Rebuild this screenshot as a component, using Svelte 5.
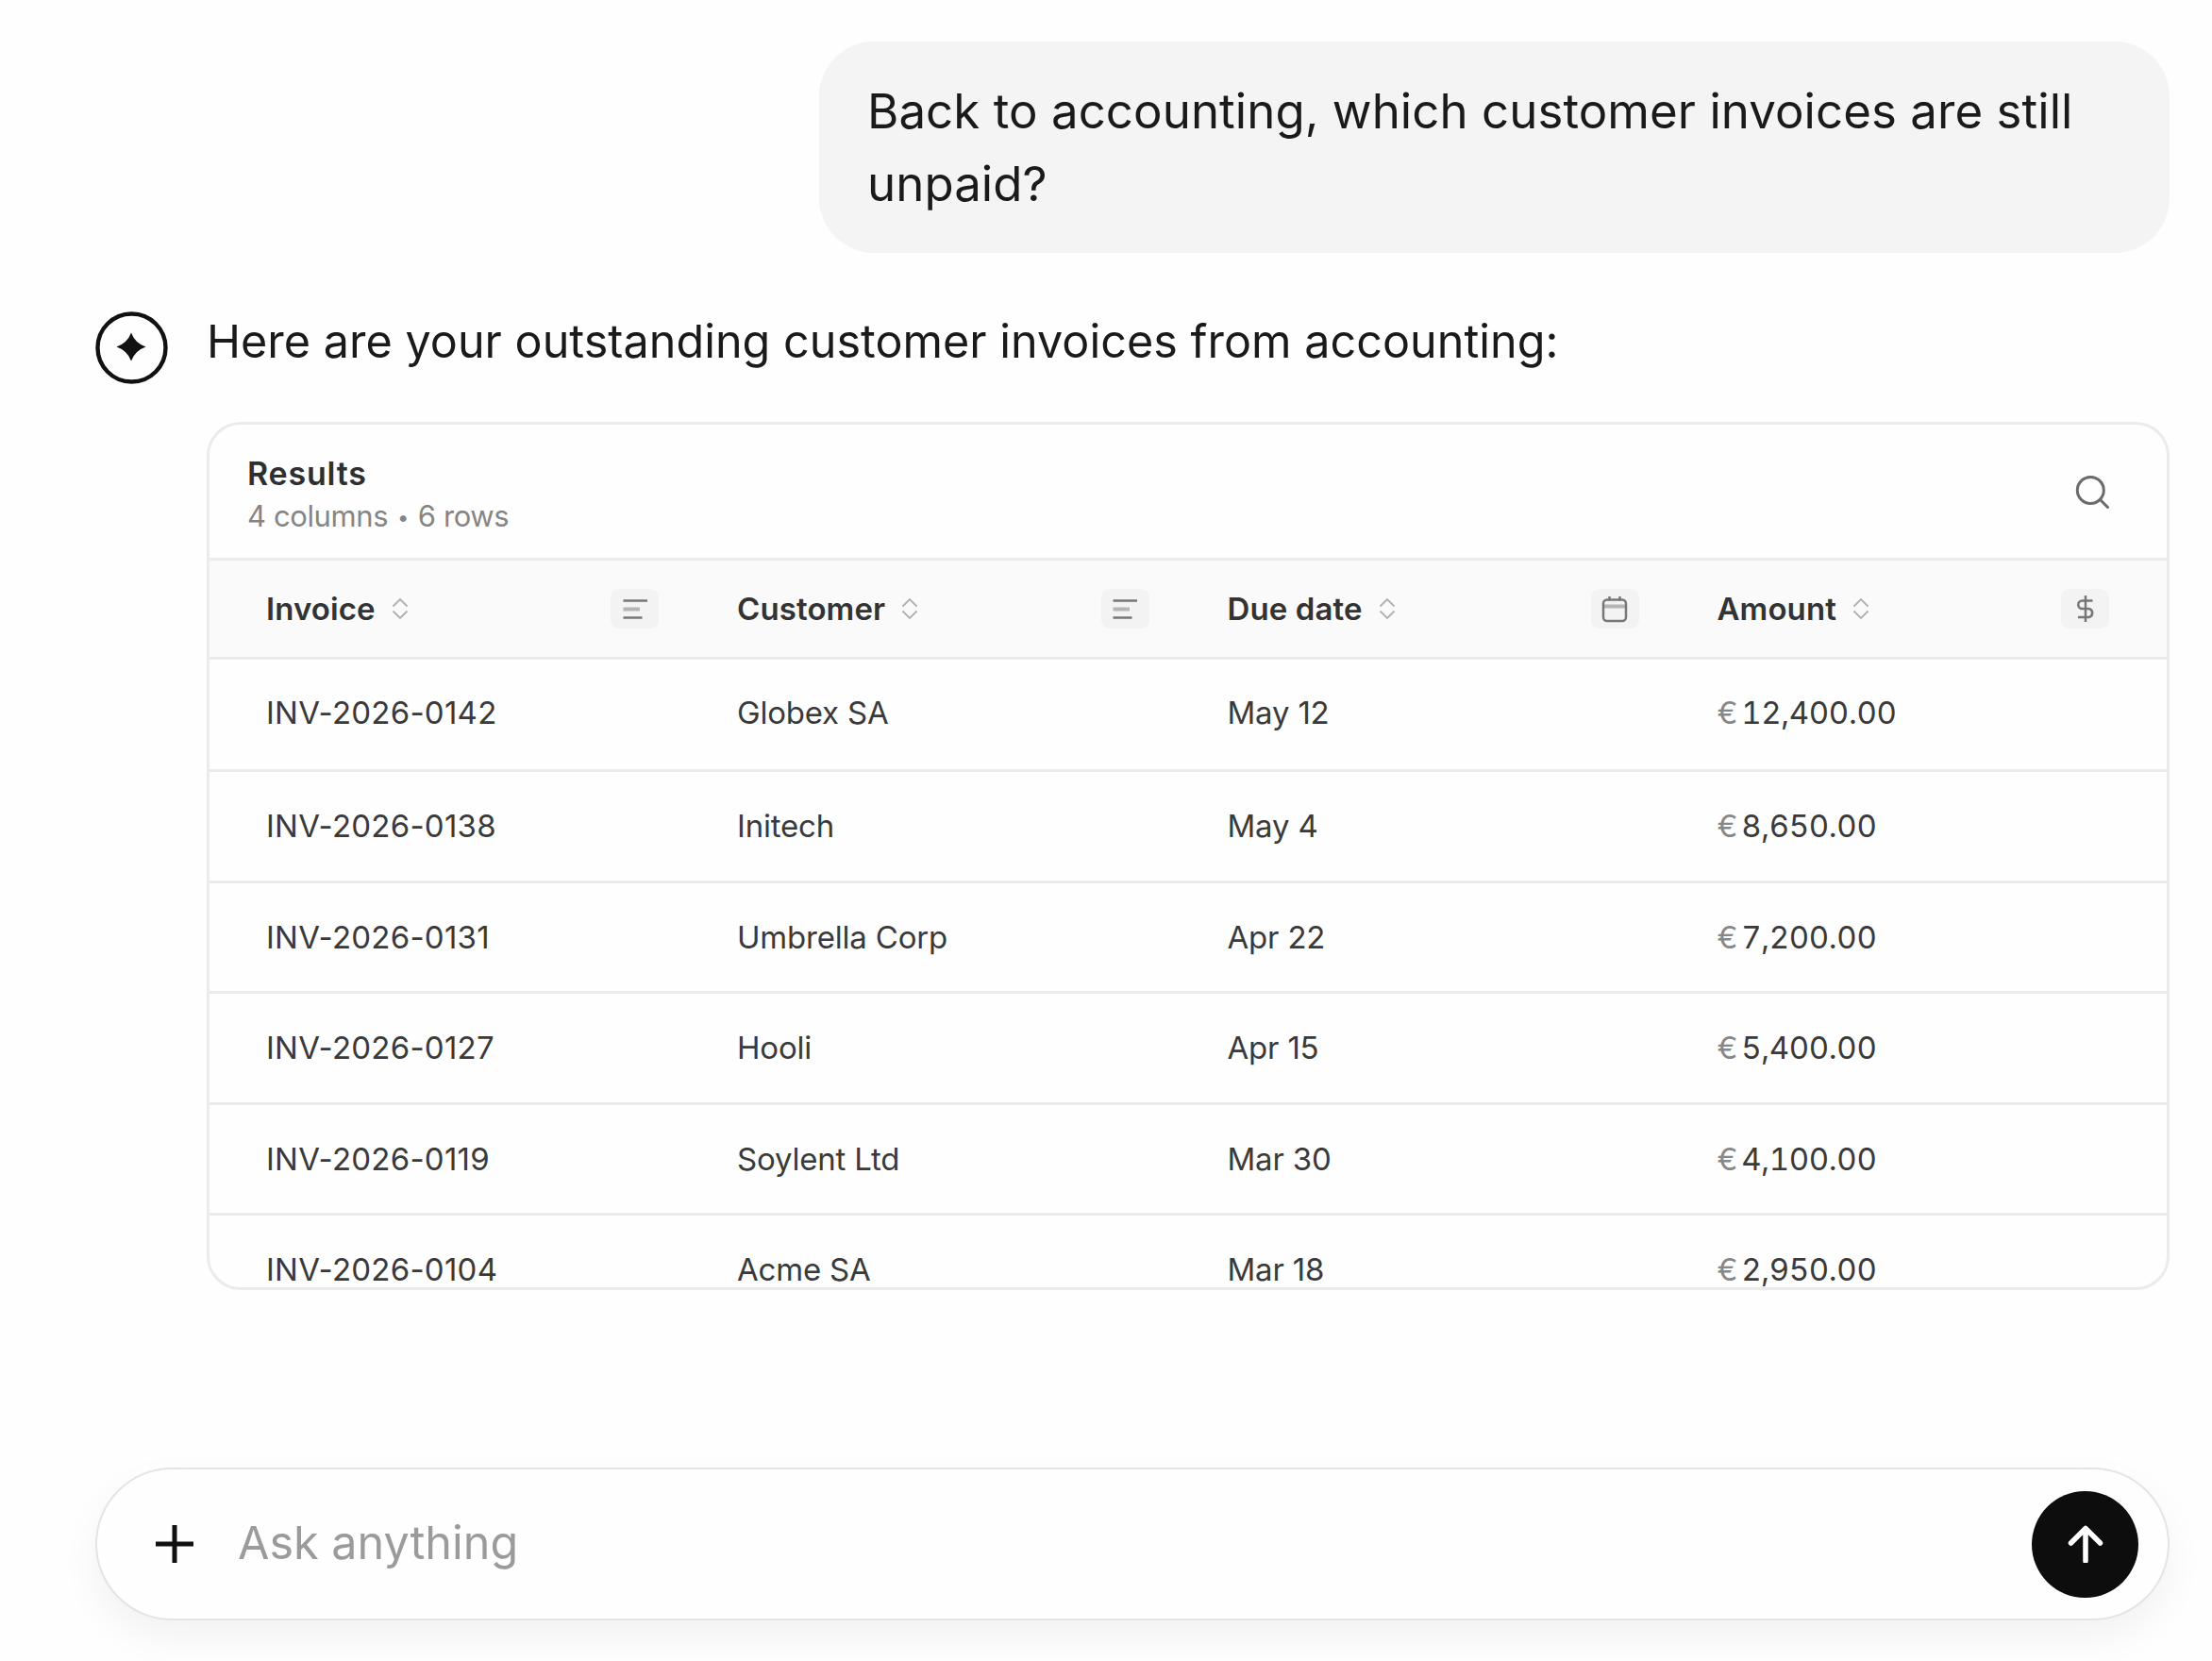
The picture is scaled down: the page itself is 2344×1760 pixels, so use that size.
<script lang="ts">
  type Kind = 'text' | 'date' | 'currency'

  const columns: { label: string; kind: Kind }[] = [
    { label: 'Invoice', kind: 'text' },
    { label: 'Customer', kind: 'text' },
    { label: 'Due date', kind: 'date' },
    { label: 'Amount', kind: 'currency' },
  ]

  const rows = [
    { id: 'INV-2026-0142', customer: 'Globex SA', due: 'May 12', amount: '12,400.00' },
    { id: 'INV-2026-0138', customer: 'Initech', due: 'May 4', amount: '8,650.00' },
    { id: 'INV-2026-0131', customer: 'Umbrella Corp', due: 'Apr 22', amount: '7,200.00' },
    { id: 'INV-2026-0127', customer: 'Hooli', due: 'Apr 15', amount: '5,400.00' },
    { id: 'INV-2026-0119', customer: 'Soylent Ltd', due: 'Mar 30', amount: '4,100.00' },
    { id: 'INV-2026-0104', customer: 'Acme SA', due: 'Mar 18', amount: '2,950.00' },
  ]

  let draft = $state('')
</script>

<main class="chat">
  <div class="bubble">Back to accounting, which customer invoices are still unpaid?</div>

  <div class="reply">
    <svg class="avatar" viewBox="0 0 77 77" aria-hidden="true">
      <circle cx="38.5" cy="38.5" r="36" fill="none" stroke="#111" stroke-width="4.4" />
      <path d="M38 22.5Q42 33.500 53.500 37.500Q42 41.500 38 52.500Q34 41.500 22.500 37.500Q34 33.500 38 22.500Z" fill="#111" />
    </svg>

    <div class="content">
      <p class="intro">Here are your outstanding customer invoices from accounting:</p>

      <section class="card">
        <header class="card-head">
          <div>
            <h2>Results</h2>
            <p class="meta">{columns.length} columns <span class="dot">•</span> {rows.length} rows</p>
          </div>
          <button class="search" aria-label="Search">
            <svg width="40" height="40" viewBox="0 0 40 40">
              <circle cx="18.300" cy="18.500" r="14" />
              <path d="M28.500 28.500L36.500 36.500" />
            </svg>
          </button>
        </header>

        <div class="row labels">
          {#each columns as col}
            <div class="cell">
              <span class="label">{col.label}</span>
              <svg class="sort" width="18" height="24" viewBox="0 0 18 24">
                <path d="M1.500 9.500L9 2L16.500 9.500M1.500 14.500L9 22L16.500 14.500" />
              </svg>
              <span class="kind">
                <svg width="36" height="36" viewBox="0 0 36 36">
                  {#if col.kind === 'text'}
                    <path d="M5.500 9.500H31M5.500 27.500H25.500" />
                    <path class="soft" d="M5.500 18.500H23" />
                  {:else if col.kind === 'date'}
                    <path class="soft" d="M7 15.500H29" />
                    <rect x="6" y="8.500" width="24" height="22.500" rx="4" />
                    <path d="M12.500 5V9.500M23.500 5V9.500" />
                  {:else}
                    <path d="M18 4V32M25.500 9.500H14.500A4.200 4.200 0 0 0 14.500 18H21.500A4.600 4.600 0 0 1 21.500 27H10" />
                  {/if}
                </svg>
              </span>
            </div>
          {/each}
        </div>

        {#each rows as row}
          <div class="row">
            <div class="cell id">{row.id}</div>
            <div class="cell">{row.customer}</div>
            <div class="cell">{row.due}</div>
            <div class="cell amount"><span class="euro">€</span>{row.amount}</div>
          </div>
        {/each}
      </section>
    </div>
  </div>

  <form class="composer" onsubmit={(e) => e.preventDefault()}>
    <button class="add" type="button" aria-label="Add">
      <svg width="42" height="42" viewBox="0 0 42 42"><path d="M21 1V41M1 21H41" /></svg>
    </button>
    <input bind:value={draft} placeholder="Ask anything" />
    <button class="send" type="submit" aria-label="Send">
      <svg width="40" height="40" viewBox="0 0 40 40"><path d="M20 38V4M4.500 19L20 3.500L35.500 19" /></svg>
    </button>
  </form>
</main>

<style>
  :global(body) {
    background: #fefefe;
  }
  .chat {
    box-sizing: border-box;
    width: 2344px;
    height: 1760px;
    padding: 44px 45px 0 101px;
    display: flex;
    flex-direction: column;
    overflow: hidden;
    font-family: Inter, 'Liberation Sans', sans-serif;
    color: #1a1a1a;
  }
  button {
    padding: 0;
    border: 0;
    background: none;
    display: flex;
    align-items: center;
    justify-content: center;
  }
  svg {
    display: block;
  }
  p,
  h2 {
    margin: 0;
  }
  .bubble {
    box-sizing: border-box;
    align-self: flex-end;
    width: 1431px;
    height: 224px;
    padding: 36px 51px;
    border-radius: 58px;
    background: #f4f4f4;
    font-size: 51px;
    line-height: 76.5px;
    letter-spacing: 0.05px;
  }
  .reply {
    display: flex;
    gap: 41px;
    margin-top: 62px;
  }
  .avatar {
    flex: none;
    width: 77px;
    height: 77px;
  }
  .content {
    flex: 1;
  }
  .intro {
    height: 117px;
    font-size: 48.5px;
    line-height: 63px;
    letter-spacing: 0.02px;
    white-space: nowrap;
  }
  .card {
    box-sizing: border-box;
    height: 920px;
    border: 3px solid #ebebeb;
    border-radius: 36px;
    background: #fefefe;
    overflow: hidden;
  }
  .card-head {
    box-sizing: border-box;
    height: 144px;
    padding: 0 59px 0 40px;
    display: flex;
    align-items: center;
    justify-content: space-between;
    border-bottom: 3px solid #ebebeb;
  }
  h2 {
    padding-top: 7px;
    font-size: 34px;
    line-height: 46px;
    font-weight: 600;
    letter-spacing: 0.8px;
    color: #2e3030;
  }
  .meta {
    font-size: 31px;
    line-height: 44px;
    letter-spacing: -0.4px;
    color: #858585;
  }
  .dot {
    margin: 0 1.5px;
    font-size: 22px;
    vertical-align: 2px;
  }
  .search svg {
    fill: none;
    stroke: #6b6b6b;
    stroke-width: 3;
    stroke-linecap: round;
  }
  .row {
    box-sizing: border-box;
    height: 117.5px;
    display: grid;
    grid-template-columns: 499px 519.500px 519px 1fr;
    border-bottom: 3px solid #ebebeb;
    font-size: 33px;
    letter-spacing: -0.2px;
    color: #3a3a3a;
  }
  .row.labels {
    height: 104.5px;
    background: #fafafa;
    font-weight: 600;
    letter-spacing: 0.1px;
    color: #333;
  }
  .labels + .row {
    height: 119.5px;
    padding-bottom: 3px;
  }
  .cell {
    padding: 0 23px 0 60px;
    display: flex;
    align-items: center;
  }
  .cell:last-child {
    padding-right: 61px;
  }
  .id {
    letter-spacing: 0.25px;
  }
  .amount {
    letter-spacing: -0.35px;
    font-variant-numeric: tabular-nums;
  }
  .sort {
    margin-left: 17px;
    fill: none;
    stroke: #b0b0b0;
    stroke-width: 1.800;
  }
  .kind {
    width: 51px;
    height: 42px;
    margin-left: auto;
    display: flex;
    align-items: center;
    justify-content: center;
    border-radius: 9px;
    background: #f3f3f3;
  }
  .kind svg {
    fill: none;
    stroke: #777;
    stroke-width: 2.500;
  }
  .kind .soft {
    stroke: #b5b5b5;
    stroke-width: 4;
  }
  .euro {
    margin-right: 4px;
    color: #888;
  }
  .composer {
    box-sizing: border-box;
    height: 162px;
    margin-top: 188px;
    padding: 0 31px 0 61px;
    display: flex;
    align-items: center;
    border: 2px solid #e4e4e4;
    border-radius: 81px;
    background: #fefefe;
    box-shadow: 0 18px 42px rgba(0, 0, 0, 0.05);
  }
  .add svg {
    fill: none;
    stroke: #111;
    stroke-width: 5;
  }
  input {
    flex: 1;
    margin-left: 46px;
    padding: 0 0 4px;
    border: 0;
    outline: 0;
    background: none;
    font: 48.5px Inter, 'Liberation Sans', sans-serif;
    color: #1a1a1a;
  }
  input::placeholder {
    color: #9b9b9b;
  }
  .send {
    width: 113px;
    height: 113px;
    border-radius: 50%;
    background: #0d0d0d;
  }
  .send svg {
    fill: none;
    stroke: #fff;
    stroke-width: 5.500;
    stroke-linecap: round;
    stroke-linejoin: round;
  }
</style>
